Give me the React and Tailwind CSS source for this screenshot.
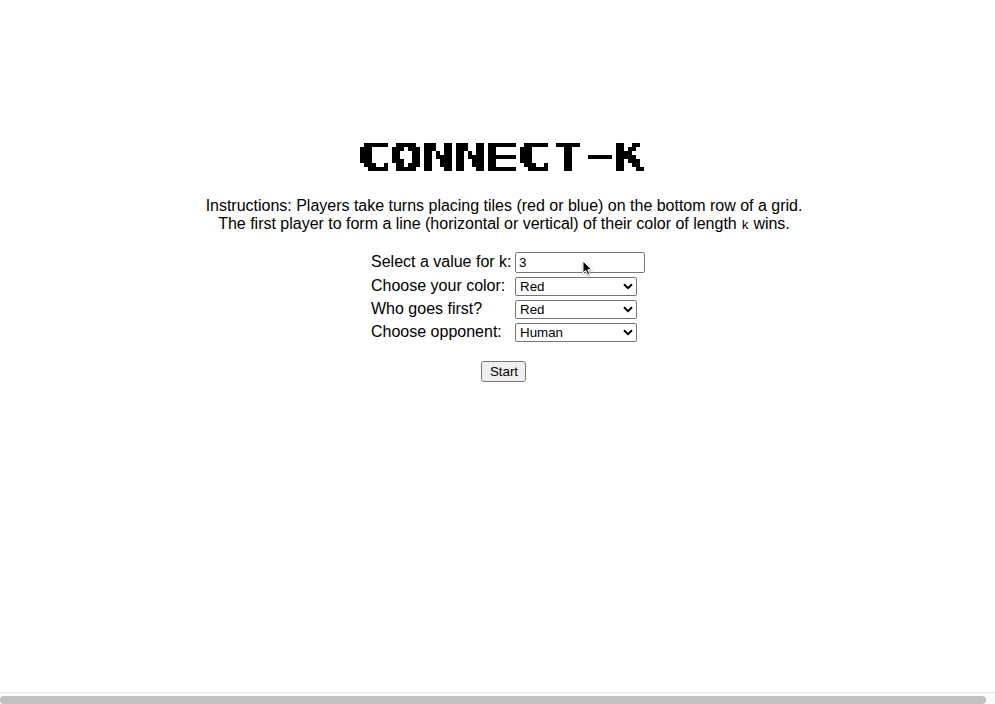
import React from "react";

function PixelFilter() {
  return (
    <svg width="0" height="0" className="absolute" aria-hidden="true">
      <filter
        id="pixelate"
        filterUnits="userSpaceOnUse"
        primitiveUnits="userSpaceOnUse"
        x="0"
        y="0"
        width="288"
        height="32"
        colorInterpolationFilters="sRGB"
      >
        <feFlood x="1" y="2" width="1" height="1" floodColor="#000" result="px" />
        <feOffset in="px" dx="0" dy="0" x="0" y="0" width="4" height="4" result="cell" />
        <feTile in="cell" x="0" y="0" width="288" height="32" result="grid" />
        <feComposite in="SourceGraphic" in2="grid" operator="in" result="samples" />
        <feComponentTransfer in="samples" result="solid">
          <feFuncA type="discrete" tableValues="0 1" />
        </feComponentTransfer>
        <feMorphology in="solid" operator="dilate" radius="1" result="three" />
        <feOffset in="three" dx="1" dy="0" result="right" />
        <feOffset in="three" dx="0" dy="-1" result="up" />
        <feOffset in="three" dx="1" dy="-1" result="diag" />
        <feMerge>
          <feMergeNode in="three" />
          <feMergeNode in="right" />
          <feMergeNode in="up" />
          <feMergeNode in="diag" />
        </feMerge>
      </filter>
    </svg>
  );
}

// Each letter is stretched to fill seven of the eight cells of its column.
const LETTERS = [
  ["C", "scale-x-[1.48] translate-x-[-3.3px] [text-shadow:-0.7px_0_0_#000]"],
  ["O", "scale-x-[1.33] translate-x-[-1.1px] [text-shadow:-1px_0_0_#000]"],
  ["N", "scale-x-[1.41] translate-x-[-2.3px]"],
  ["N", "scale-x-[1.41] translate-x-[-2.3px]"],
  ["E", "scale-x-[1.52] translate-x-[-4.5px]"],
  ["C", "scale-x-[1.48] translate-x-[-3.3px] [text-shadow:-0.7px_0_0_#000]"],
  ["T", "scale-x-[1.1] translate-x-[3.1px]"],
  ["-", "scale-x-[2.1] translate-x-[-8.6px] translate-y-[-2px]"],
  ["K", "scale-x-[1.25] translate-x-[-2.2px] [text-shadow:0.8px_0_0_#000]"],
];

function Title() {
  return (
    <h1 className="mr-px ml-px h-8 w-[288px] font-['DejaVu_Sans_Mono',monospace] text-[39px] leading-[29px] font-bold whitespace-nowrap [filter:url(#pixelate)]">
      {LETTERS.map(([ch, fit], i) => (
        <span key={i} className="inline-block w-8 align-top">
          <span className={"inline-block origin-top-left align-top " + fit}>{ch}</span>
        </span>
      ))}
    </h1>
  );
}

function Select({ options }) {
  return (
    <div className="relative h-[19px] w-[122px]">
      <select className="block h-[19px] w-full appearance-none rounded-[2px] border border-[#767676] bg-white pl-1 text-[13.33px] leading-[17px] text-black">
        {options.map((o) => (
          <option key={o}>{o}</option>
        ))}
      </select>
      <svg className="pointer-events-none absolute top-[6px] right-[4px]" width="10" height="7" viewBox="0 0 10 7" fill="none" stroke="#000" strokeWidth="2">
        <path d="M1 1.2 5 5.2 9 1.2" />
      </svg>
    </div>
  );
}

function Cursor() {
  return (
    <svg className="pointer-events-none absolute top-[7px] left-[66px]" width="13" height="19" viewBox="0 0 13 19">
      <path
        d="M2 2v12l2.8-2.6 1.9 4.4 2-.9-1.9-4.2h3.8z"
        fill="#000"
        stroke="#fff"
        strokeWidth="1"
        className="drop-shadow-[0_1px_1px_rgba(0,0,0,0.4)]"
      />
    </svg>
  );
}

export default function App() {
  return (
    <div className="flex h-[704px] w-[995px] flex-col overflow-hidden bg-white font-['Liberation_Sans',Arial,sans-serif] text-base leading-[18px] text-black">
      <PixelFilter />
      <main className="flex w-[1008px] flex-1 flex-col items-center pt-[143px]">
        <Title />
        <p className="mt-[22px] text-center tracking-[-0.01px] whitespace-nowrap">
          Instructions: Players take turns placing tiles (red or blue) on the bottom row of a grid.
          <br />
          The first player to form a line (horizontal or vertical) of their color of length{" "}
          <code className="font-['Liberation_Mono',monospace] text-[13px] leading-none">k</code> wins.
        </p>
        <form className="mt-[19px] ml-[7px] flex w-[283px] flex-col pl-[5px]">
          <div className="flex h-[21px]">
            <label className="w-[144px] pt-px">Select a value for k:</label>
            <div className="relative">
              <input
                className="block h-[21px] w-[130px] rounded-[2px] border border-[#767676] bg-white px-[3px] text-[13.33px] leading-[17px]"
                defaultValue="3"
              />
              <Cursor />
            </div>
          </div>
          <div className="mt-1 flex h-[19px]">
            <label className="w-[144px]">Choose your color:</label>
            <Select options={["Red", "Blue"]} />
          </div>
          <div className="mt-1 flex h-[19px]">
            <label className="w-[144px]">Who goes first?</label>
            <Select options={["Red", "Blue"]} />
          </div>
          <div className="mt-1 flex h-[19px]">
            <label className="w-[144px]">Choose opponent:</label>
            <Select options={["Human", "Computer"]} />
          </div>
        </form>
        <button className="mt-[19px] mr-px h-[21px] w-[45px] rounded-[3px] border border-[#767676] bg-[#efefef] pl-px text-[13.33px] leading-[18px]">
          Start
        </button>
      </main>
      <div className="h-3 border-t border-[#e8e8e8] bg-[#fafafa] pt-[3px]">
        <div className="h-2 w-[986px] rounded-[4px] bg-[#c1c1c1]" />
      </div>
    </div>
  );
}
